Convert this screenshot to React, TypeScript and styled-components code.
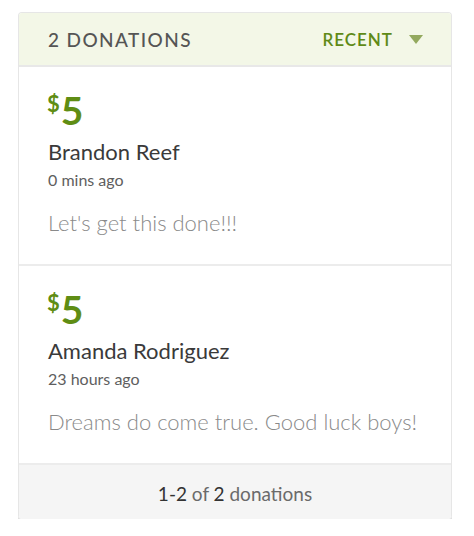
import React from "react";
import styled, { createGlobalStyle } from "styled-components";

const GlobalStyle = createGlobalStyle`
    body {
        margin: 0;
        background: #ffffff;
        font-family: Lato, "Liberation Sans", sans-serif;
    }
`

type Donation = {
    amount: number;
    name: string;
    time: string;
    message: string;
};

const donations: Donation[] = [
    { amount: 5, name: "Brandon Reef", time: "0 mins ago", message: "Let's get this done!!!" },
    { amount: 5, name: "Amanda Rodriguez", time: "23 hours ago", message: "Dreams do come true. Good luck boys!" },
];

export default function App() {
    return (
        <>
            <GlobalStyle />
            <Page>
                <Card>
                    <Header>
                        <Title>{donations.length} Donations</Title>
                        <SortButton>
                            Recent
                            <Caret viewBox="0 0 14 9">
                                <polygon points="0,0 14,0 7,9" />
                            </Caret>
                        </SortButton>
                    </Header>
                    {donations.map((d, i) => (
                        <Item key={i}>
                            <Amount>
                                <Currency>$</Currency>
                                {d.amount}
                            </Amount>
                            <Name>{d.name}</Name>
                            <Time>{d.time}</Time>
                            <Message>{d.message}</Message>
                        </Item>
                    ))}
                    <Footer>
                        <Strong>1-2</Strong> of <Strong>2</Strong> donations
                    </Footer>
                </Card>
            </Page>
        </>
    )
};

const Page = styled.div`
    padding: 12px 0 0 18px;
`
const Card = styled.section`
    width: 434px;
    box-sizing: border-box;
    border: 1px solid #e6e6e6;
    border-bottom: none;
    border-radius: 4px;
    overflow: hidden;
    box-shadow: 0 3px 0 #e0e0e0;
`
const Header = styled.div`
    display: flex;
    align-items: center;
    justify-content: space-between;
    height: 52px;
    padding: 0 28px 0 29px;
    background: #f3f7e7;
    border-bottom: 2px solid #e8e8e8;
`
const Title = styled.h2`
    margin: 0;
    font-size: 19px;
    font-weight: 500;
    letter-spacing: 1.4px;
    text-transform: uppercase;
    color: #555555;
`
const SortButton = styled.div`
    display: flex;
    align-items: center;
    gap: 16px;
    font-size: 17px;
    font-weight: 600;
    letter-spacing: 1px;
    text-transform: uppercase;
    color: #5f8a16;
`
const Caret = styled.svg`
    width: 14px;
    height: 9px;
    fill: #93a95e;
`
const Item = styled.article`
    display: flex;
    flex-direction: column;
    padding: 24px 29px 27px;
    background: #ffffff;
    border-bottom: 2px solid #ececec;
`
const Amount = styled.div`
    display: flex;
    align-items: flex-start;
    font-size: 39px;
    line-height: 38px;
    font-weight: 700;
    color: #5f8d14;
`
const Currency = styled.span`
    font-size: 22px;
    line-height: 22px;
    margin: 2px 1px 0 -1px;
`
const Name = styled.div`
    margin-top: 10px;
    font-size: 22px;
    line-height: 26px;
    color: #3a3a3a;
`
const Time = styled.div`
    margin-top: 5px;
    font-size: 16px;
    line-height: 20px;
    color: #5e5e5e;
`
const Message = styled.p`
    margin: 19px 0 0;
    font-size: 22px;
    line-height: 28px;
    font-weight: 300;
    color: #8a8a8a;
`
const Footer = styled.div`
    height: 54px;
    display: flex;
    align-items: center;
    justify-content: center;
    padding-top: 2px;
    box-sizing: border-box;
    background: #f5f5f5;
    font-size: 19px;
    color: #6a6a6a;
    white-space: pre;
`
const Strong = styled.span`
    color: #333333;
`
